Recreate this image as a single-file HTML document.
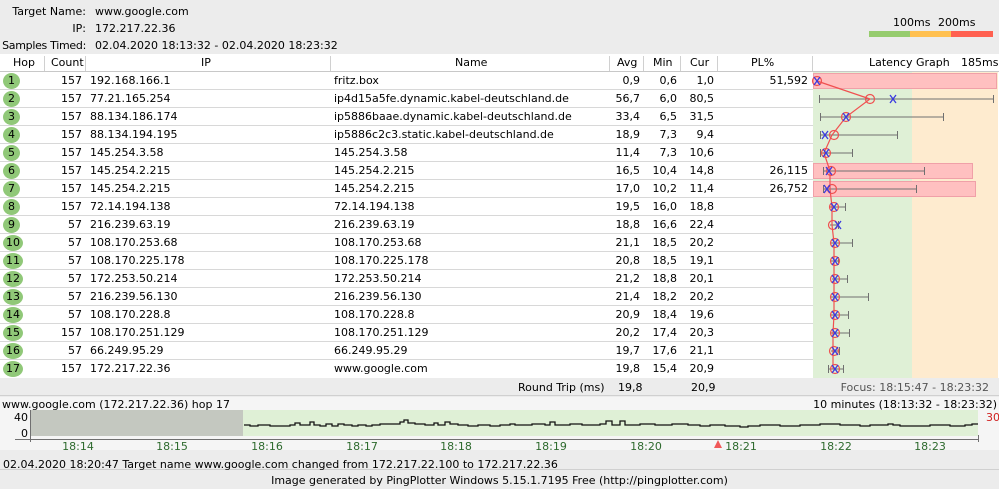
<!DOCTYPE html>
<html><head><meta charset="utf-8"><style>
*{margin:0;padding:0;box-sizing:border-box}
body{width:999px;height:489px;background:#ececec;font-family:"DejaVu Sans","Liberation Sans",sans-serif;font-size:11px;color:#000;position:relative;overflow:hidden}
.a{position:absolute;white-space:nowrap}
.r{text-align:right}
#tbl{position:absolute;left:0;top:54px;width:999px;height:324px;background:#fff}
.row{position:absolute;left:0;width:813px;height:18px;border-bottom:1px solid #d8d8d8}
.row div{position:absolute;top:2px;white-space:nowrap}
.hop{left:3px;top:1px!important;width:17px;height:16px;border-radius:50%;background:#90c878;text-align:center;line-height:16px;font-size:11px}
</style></head><body>
<div class="a r" style="left:0;width:86px;top:5px">Target Name:</div>
<div class="a" style="left:95px;top:5px">www.google.com</div>
<div class="a r" style="left:0;width:86px;top:22px">IP:</div>
<div class="a" style="left:95px;top:22px">172.217.22.36</div>
<div class="a r" style="left:0;width:86px;top:39px;letter-spacing:-0.3px">Samples Timed:</div>
<div class="a" style="left:95px;top:39px">02.04.2020 18:13:32 - 02.04.2020 18:23:32</div>
<div class="a" style="left:893px;top:16px">100ms</div>
<div class="a" style="left:938px;top:16px">200ms</div>
<div class="a" style="left:869px;top:31px;width:41px;height:6px;background:#96cc6e"></div>
<div class="a" style="left:910px;top:31px;width:41px;height:6px;background:#ffc050"></div>
<div class="a" style="left:951px;top:31px;width:42px;height:6px;background:#ff6050"></div>
<div id="tbl">
<div class="row" style="top:0;width:999px;height:18px;border-bottom:1px solid #c8c8c8">
<div style="left:13px">Hop</div><div style="left:51px">Count</div><div style="left:201px">IP</div><div style="left:455px">Name</div><div style="left:617px">Avg</div><div style="left:653px">Min</div><div style="left:690px">Cur</div><div style="left:751px">PL%</div><div style="left:869px">Latency Graph</div><div style="left:961px">185ms</div>
</div>
<svg class="a" style="left:0;top:0" width="999" height="18"><g stroke="#d0d0d0"><line x1="44.5" y1="2" x2="44.5" y2="17"/><line x1="85.5" y1="2" x2="85.5" y2="17"/><line x1="330.5" y1="2" x2="330.5" y2="17"/><line x1="609.5" y1="2" x2="609.5" y2="17"/><line x1="643.5" y1="2" x2="643.5" y2="17"/><line x1="680.5" y1="2" x2="680.5" y2="17"/><line x1="717.5" y1="2" x2="717.5" y2="17"/><line x1="812.5" y1="2" x2="812.5" y2="17"/></g></svg>
</div>
<svg class="a" style="left:813px;top:72px" width="186" height="306">
<rect x="0" y="0" width="99" height="306" fill="#dff0d6"/><rect x="99" y="0" width="86" height="306" fill="#feebcf"/>
</svg>
<div style="position:absolute;left:0;top:72px;width:813px">
<div class="row" style="top:0;background:#fff"><div class="hop">1</div><div class="r" style="left:45px;width:37px">157</div><div style="left:90px">192.168.166.1</div><div style="left:334px">fritz.box</div><div class="r" style="left:610px;width:30px">0,9</div><div class="r" style="left:644px;width:33px">0,6</div><div class="r" style="left:681px;width:33px">1,0</div><div class="r" style="left:718px;width:90px">51,592</div></div>
<div class="row" style="top:18px;background:#fff"><div class="hop">2</div><div class="r" style="left:45px;width:37px">157</div><div style="left:90px">77.21.165.254</div><div style="left:334px">ip4d15a5fe.dynamic.kabel-deutschland.de</div><div class="r" style="left:610px;width:30px">56,7</div><div class="r" style="left:644px;width:33px">6,0</div><div class="r" style="left:681px;width:33px">80,5</div></div>
<div class="row" style="top:36px;background:#fff"><div class="hop">3</div><div class="r" style="left:45px;width:37px">157</div><div style="left:90px">88.134.186.174</div><div style="left:334px">ip5886baae.dynamic.kabel-deutschland.de</div><div class="r" style="left:610px;width:30px">33,4</div><div class="r" style="left:644px;width:33px">6,5</div><div class="r" style="left:681px;width:33px">31,5</div></div>
<div class="row" style="top:54px;background:#fff"><div class="hop">4</div><div class="r" style="left:45px;width:37px">157</div><div style="left:90px">88.134.194.195</div><div style="left:334px">ip5886c2c3.static.kabel-deutschland.de</div><div class="r" style="left:610px;width:30px">18,9</div><div class="r" style="left:644px;width:33px">7,3</div><div class="r" style="left:681px;width:33px">9,4</div></div>
<div class="row" style="top:72px;background:#fff"><div class="hop">5</div><div class="r" style="left:45px;width:37px">157</div><div style="left:90px">145.254.3.58</div><div style="left:334px">145.254.3.58</div><div class="r" style="left:610px;width:30px">11,4</div><div class="r" style="left:644px;width:33px">7,3</div><div class="r" style="left:681px;width:33px">10,6</div></div>
<div class="row" style="top:90px;background:#fff"><div class="hop">6</div><div class="r" style="left:45px;width:37px">157</div><div style="left:90px">145.254.2.215</div><div style="left:334px">145.254.2.215</div><div class="r" style="left:610px;width:30px">16,5</div><div class="r" style="left:644px;width:33px">10,4</div><div class="r" style="left:681px;width:33px">14,8</div><div class="r" style="left:718px;width:90px">26,115</div></div>
<div class="row" style="top:108px;background:#fff"><div class="hop">7</div><div class="r" style="left:45px;width:37px">157</div><div style="left:90px">145.254.2.215</div><div style="left:334px">145.254.2.215</div><div class="r" style="left:610px;width:30px">17,0</div><div class="r" style="left:644px;width:33px">10,2</div><div class="r" style="left:681px;width:33px">11,4</div><div class="r" style="left:718px;width:90px">26,752</div></div>
<div class="row" style="top:126px;background:#fff"><div class="hop">8</div><div class="r" style="left:45px;width:37px">157</div><div style="left:90px">72.14.194.138</div><div style="left:334px">72.14.194.138</div><div class="r" style="left:610px;width:30px">19,5</div><div class="r" style="left:644px;width:33px">16,0</div><div class="r" style="left:681px;width:33px">18,8</div></div>
<div class="row" style="top:144px;background:#fff"><div class="hop">9</div><div class="r" style="left:45px;width:37px">57</div><div style="left:90px">216.239.63.19</div><div style="left:334px">216.239.63.19</div><div class="r" style="left:610px;width:30px">18,8</div><div class="r" style="left:644px;width:33px">16,6</div><div class="r" style="left:681px;width:33px">22,4</div></div>
<div class="row" style="top:162px;background:#fff"><div class="hop" style="width:20px">10</div><div class="r" style="left:45px;width:37px">57</div><div style="left:90px">108.170.253.68</div><div style="left:334px">108.170.253.68</div><div class="r" style="left:610px;width:30px">21,1</div><div class="r" style="left:644px;width:33px">18,5</div><div class="r" style="left:681px;width:33px">20,2</div></div>
<div class="row" style="top:180px;background:#fff"><div class="hop" style="width:20px">11</div><div class="r" style="left:45px;width:37px">57</div><div style="left:90px">108.170.225.178</div><div style="left:334px">108.170.225.178</div><div class="r" style="left:610px;width:30px">20,8</div><div class="r" style="left:644px;width:33px">18,5</div><div class="r" style="left:681px;width:33px">19,1</div></div>
<div class="row" style="top:198px;background:#fff"><div class="hop" style="width:20px">12</div><div class="r" style="left:45px;width:37px">57</div><div style="left:90px">172.253.50.214</div><div style="left:334px">172.253.50.214</div><div class="r" style="left:610px;width:30px">21,2</div><div class="r" style="left:644px;width:33px">18,8</div><div class="r" style="left:681px;width:33px">20,1</div></div>
<div class="row" style="top:216px;background:#fff"><div class="hop" style="width:20px">13</div><div class="r" style="left:45px;width:37px">57</div><div style="left:90px">216.239.56.130</div><div style="left:334px">216.239.56.130</div><div class="r" style="left:610px;width:30px">21,4</div><div class="r" style="left:644px;width:33px">18,2</div><div class="r" style="left:681px;width:33px">20,2</div></div>
<div class="row" style="top:234px;background:#fff"><div class="hop" style="width:20px">14</div><div class="r" style="left:45px;width:37px">57</div><div style="left:90px">108.170.228.8</div><div style="left:334px">108.170.228.8</div><div class="r" style="left:610px;width:30px">20,9</div><div class="r" style="left:644px;width:33px">18,4</div><div class="r" style="left:681px;width:33px">19,6</div></div>
<div class="row" style="top:252px;background:#fff"><div class="hop" style="width:20px">15</div><div class="r" style="left:45px;width:37px">157</div><div style="left:90px">108.170.251.129</div><div style="left:334px">108.170.251.129</div><div class="r" style="left:610px;width:30px">20,2</div><div class="r" style="left:644px;width:33px">17,4</div><div class="r" style="left:681px;width:33px">20,3</div></div>
<div class="row" style="top:270px;background:#fff"><div class="hop" style="width:20px">16</div><div class="r" style="left:45px;width:37px">57</div><div style="left:90px">66.249.95.29</div><div style="left:334px">66.249.95.29</div><div class="r" style="left:610px;width:30px">19,7</div><div class="r" style="left:644px;width:33px">17,6</div><div class="r" style="left:681px;width:33px">21,1</div></div>
<div class="row" style="top:288px;background:#fff;border-bottom:none"><div class="hop" style="width:20px">17</div><div class="r" style="left:45px;width:37px">157</div><div style="left:90px">172.217.22.36</div><div style="left:334px">www.google.com</div><div class="r" style="left:610px;width:30px">19,8</div><div class="r" style="left:644px;width:33px">15,4</div><div class="r" style="left:681px;width:33px">20,9</div></div>
</div>
<svg class="a" style="left:0;top:0" width="999" height="380">
<g fill="#ffc0c0" stroke="#f0a0a8"><rect x="813.5" y="73.5" width="183" height="15"/><rect x="813.5" y="163.5" width="159" height="15"/><rect x="813.5" y="181.5" width="162" height="15"/></g>
<g stroke="#707070" stroke-width="1" fill="none">
<path d="M819.5 99H993M819.5 95v8M993.5 95v8"/>
<path d="M820.5 117H943M820.5 113v8M943.5 113v8"/>
<path d="M820.5 135H897M820.5 131v8M897.5 131v8"/>
<path d="M820.5 153H852M820.5 149v8M852.5 149v8"/>
<path d="M823.5 171H924M823.5 167v8M924.5 167v8"/>
<path d="M823.5 189H916M823.5 185v8M916.5 185v8"/>
<path d="M829 207H845M845.5 203v8"/>
<path d="M830 225H838M838.5 221v8"/>
<path d="M831 243H852M852.5 239v8"/>
<path d="M831 261H838M838.5 257v8"/>
<path d="M832 279H847M847.5 275v8"/>
<path d="M831 297H868M868.5 293v8"/>
<path d="M831 315H848M848.5 311v8"/>
<path d="M830 333H849M849.5 329v8"/>
<path d="M831 351H839M839.5 347v8"/>
<path d="M828.5 369H843M828.5 365v8M843.5 365v8"/>
</g>
<polyline fill="none" stroke="#f05050" stroke-width="1.2" points="817,81 870,99 846,117 832,135 824,153 830,171 830,189 832,207 832,225 834,243 834,261 834,279 834,297 834,315 833,333 833,351 833,369"/>
<g fill="none" stroke="#f05050" stroke-width="1.2">
<circle cx="817" cy="81" r="4.5"/><circle cx="870" cy="99" r="4.5"/><circle cx="846" cy="117" r="4.5"/><circle cx="834" cy="135" r="4.5"/><circle cx="826" cy="153" r="4.5"/><circle cx="831" cy="171" r="4.5"/><circle cx="832" cy="189" r="4.5"/><circle cx="834" cy="207" r="4.5"/><circle cx="833" cy="225" r="4.5"/><circle cx="835" cy="243" r="4.5"/><circle cx="835" cy="261" r="4.5"/><circle cx="835" cy="279" r="4.5"/><circle cx="835" cy="297" r="4.5"/><circle cx="835" cy="315" r="4.5"/><circle cx="835" cy="333" r="4.5"/><circle cx="834" cy="351" r="4.5"/><circle cx="835" cy="369" r="4.5"/>
</g>
<g stroke="#3a3ae0" stroke-width="1.3">
<path d="M814 77l6 8M820 77l-6 8"/>
<path d="M890 95l6 8M896 95l-6 8"/>
<path d="M843 113l6 8M849 113l-6 8"/>
<path d="M822 131l6 8M828 131l-6 8"/>
<path d="M823 149l6 8M829 149l-6 8"/>
<path d="M826 167l6 8M832 167l-6 8"/>
<path d="M824 185l6 8M830 185l-6 8"/>
<path d="M831 203l6 8M837 203l-6 8"/>
<path d="M835 221l6 8M841 221l-6 8"/>
<path d="M832 239l6 8M838 239l-6 8"/>
<path d="M832 257l6 8M838 257l-6 8"/>
<path d="M832 275l6 8M838 275l-6 8"/>
<path d="M832 293l6 8M838 293l-6 8"/>
<path d="M832 311l6 8M838 311l-6 8"/>
<path d="M832 329l6 8M838 329l-6 8"/>
<path d="M832 347l6 8M838 347l-6 8"/>
<path d="M832 365l6 8M838 365l-6 8"/>
</g>
</svg>
<div class="a" style="left:0;top:378px;width:999px;height:18px;background:#ececec;border-bottom:1px solid #d0d0d0"></div>
<div class="a" style="left:518px;top:381px">Round Trip (ms)</div>
<div class="a" style="left:618px;top:381px">19,8</div>
<div class="a" style="left:691px;top:381px">20,9</div>
<div class="a r" style="left:700px;width:289px;top:381px;color:#555">Focus: 18:15:47 - 18:23:32</div>
<div class="a" style="left:0;top:397px;width:999px;height:53px;background:#f5f5f5"></div>
<div class="a" style="left:2px;top:398px">www.google.com (172.217.22.36) hop 17</div>
<div class="a r" style="left:700px;width:297px;top:398px">10 minutes (18:13:32 - 18:23:32)</div>
<svg class="a" style="left:0;top:397px" width="999" height="53">
<rect x="31" y="13" width="212" height="26" fill="#c4c8c0"/>
<rect x="243" y="13" width="735" height="26" fill="#dff0d6"/>
<line x1="15" y1="42.5" x2="979" y2="42.5" stroke="#707070"/>
<line x1="30.5" y1="13" x2="30.5" y2="45" stroke="#707070"/>
<line x1="978.5" y1="38" x2="978.5" y2="45" stroke="#707070"/>
<text x="28" y="24" font-size="11" text-anchor="end" font-family="DejaVu Sans">40</text>
<text x="28" y="40" font-size="11" text-anchor="end" font-family="DejaVu Sans">0</text>
<text x="986" y="24" font-size="11" fill="#d02020" font-family="DejaVu Sans">30</text>
<polyline fill="none" stroke="#111" stroke-width="1.3" points="244,28 250,28 250,29 258,29 258,28 270,28 270,29 290,29 290,28 295,28 295,26 300,26 300,28 310,28 310,25 314,25 314,28 320,28 320,29 326,29 326,27 332,27 332,29 338,29 338,27 344,27 344,28 352,28 352,29 358,29 358,28 366,28 366,29 372,29 372,28 380,28 380,27 400,27 400,25 404,25 404,23 408,23 408,26 415,26 415,27 425,27 425,28 434,28 434,26 438,26 438,28 445,28 445,25 450,25 450,27 458,27 458,28 468,28 468,29 478,29 478,28 490,28 490,29 500,29 500,28 510,28 510,27 515,27 515,28 532,28 532,27 545,27 545,28 550,28 550,25 555,25 555,28 570,28 570,27 582,27 582,28 600,28 600,27 606,27 606,24 612,24 612,28 620,28 620,24 625,24 625,28 640,28 640,27 655,27 655,28 672,28 672,27 688,27 688,28 700,28 700,29 710,29 710,28 725,28 725,29 740,29 740,30 748,30 748,29 760,29 760,28 780,28 780,29 800,29 800,28 820,28 820,27 840,27 840,28 860,28 860,29 870,29 870,28 888,28 888,27 893,27 893,28 900,28 900,29 930,29 930,28 950,28 950,29 965,29 965,28 972,28 972,27 978,27"/>
<g fill="#2e6a2e" font-size="11" font-family="DejaVu Sans" text-anchor="middle">
<text x="78" y="53">18:14</text><text x="172" y="53">18:15</text><text x="267" y="53">18:16</text><text x="362" y="53">18:17</text><text x="456" y="53">18:18</text><text x="551" y="53">18:19</text><text x="646" y="53">18:20</text><text x="741" y="53">18:21</text><text x="836" y="53">18:22</text><text x="930" y="53">18:23</text></g>
<polygon points="718,43 714,51 722,51" fill="#f05858"/>
</svg>
<div class="a" style="left:0;top:450px;width:999px;height:20px;background:#ececec;border-bottom:1px solid #d0d0d0"></div>
<div class="a" style="left:3px;top:458px">02.04.2020 18:20:47 Target name www.google.com changed from 172.217.22.100 to 172.217.22.36</div>
<div class="a" style="left:0;top:474px;width:999px;text-align:center">Image generated by PingPlotter Windows 5.15.1.7195 Free (http://pingplotter.com)</div>
</body></html>
